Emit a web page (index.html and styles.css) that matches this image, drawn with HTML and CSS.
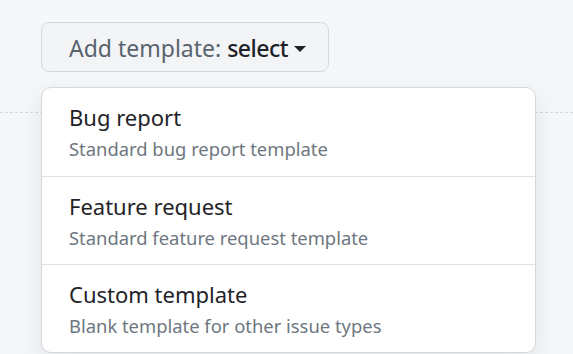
FILE: index.html
```html
<!DOCTYPE html>
<html lang="en">
<head>
    <meta charset="UTF-8">
    <title>Add template</title>
    <link rel="stylesheet" href="styles.css">
</head>
<body>
    <div class="page">
        <div class="template-picker">
            <button class="picker-button" type="button">
                <span class="picker-label">Add template:</span>
                <span class="picker-value">select</span>
                <span class="caret"></span>
            </button>
            <div class="timeline-divider"></div>
            <div class="template-menu">
                <div class="menu-item">
                    <div class="item-title">Bug report</div>
                    <div class="item-desc">Standard bug report template</div>
                </div>
                <div class="menu-item">
                    <div class="item-title">Feature request</div>
                    <div class="item-desc">Standard feature request template</div>
                </div>
                <div class="menu-item">
                    <div class="item-title">Custom template</div>
                    <div class="item-desc">Blank template for other issue types</div>
                </div>
            </div>
        </div>
    </div>
</body>
</html>
```

FILE: styles.css
```css
html, body {
    margin: 0;
    padding: 0;
    height: 100%;
}
body {
    background: #f6f7f9;
    font-family: 'Noto Sans', 'Open Sans', sans-serif;
    color: #1f2328;
    overflow: hidden;
}
.page {
    padding: 22px 0 0 0;
}
.template-picker {
    position: relative;
}
.picker-button {
    margin-left: 41px;
    width: 288px;
    height: 50px;
    padding: 2px 0 0 27px;
    display: flex;
    align-items: center;
    gap: 6px;
    background: #f3f4f6;
    border: 1px solid #d5d9de;
    border-radius: 8px;
    font-family: inherit;
    font-size: 23px;
    color: #59636e;
}
.picker-value {
    color: #1f2328;
    font-weight: 500;
    letter-spacing: -0.5px;
}
.caret {
    width: 0;
    height: 0;
    border-left: 6px solid transparent;
    border-right: 6px solid transparent;
    border-top: 6px solid #1f2328;
    margin-top: 2px;
}
.timeline-divider {
    margin-top: 40px;
    border-top: 1px dashed #d5d9de;
}
.template-menu {
    position: absolute;
    top: 65px;
    left: 41px;
    width: 493px;
    background: #fff;
    border: 1px solid #d5d9de;
    border-radius: 10px;
    box-shadow: 0 8px 24px rgba(140, 149, 159, 0.2);
    overflow: hidden;
}
.menu-item {
    height: 88px;
    padding: 0 27px;
    display: flex;
    flex-direction: column;
    justify-content: center;
    gap: 6px;
    border-top: 1px solid #dfe3e8;
    box-sizing: border-box;
}
.menu-item:first-child {
    border-top: none;
}
.item-title {
    font-size: 22px;
    line-height: 28px;
}
.item-desc {
    font-size: 18.4px;
    line-height: 24px;
    color: #6e7781;
}
```
